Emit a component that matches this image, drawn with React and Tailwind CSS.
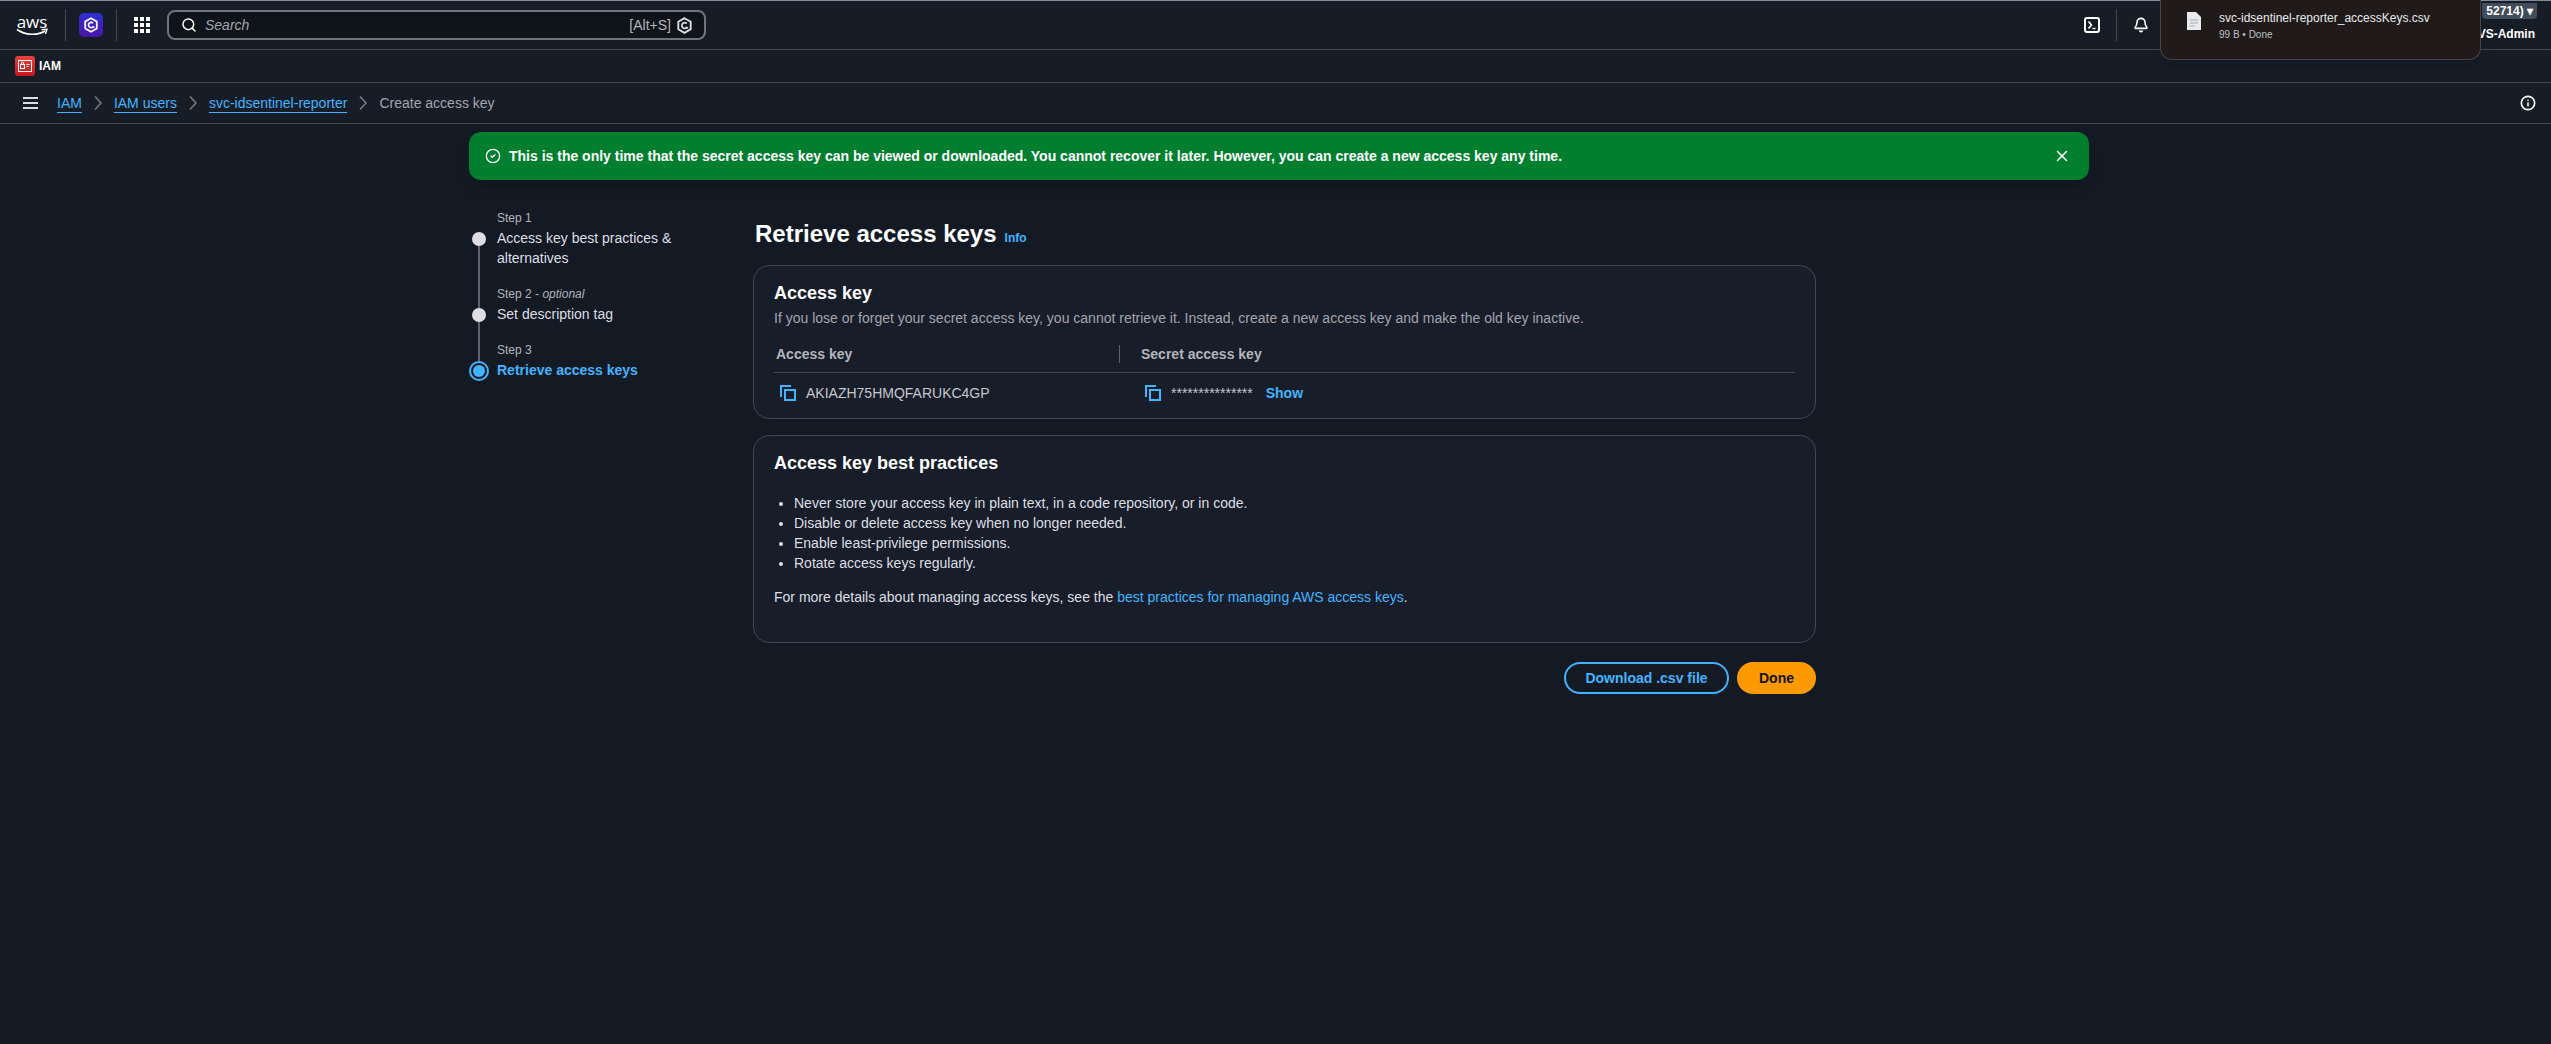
import { Search, X, Bell, CircleCheck, Info } from "lucide-react";

const crumbs = [
  { label: "IAM", link: true },
  { label: "IAM users", link: true },
  { label: "svc-idsentinel-reporter", link: true },
  { label: "Create access key", link: false },
];

const practices = [
  "Never store your access key in plain text, in a code repository, or in code.",
  "Disable or delete access key when no longer needed.",
  "Enable least-privilege permissions.",
  "Rotate access keys regularly.",
];

const Chevron = () => (
  <svg width="8" height="16" viewBox="0 0 8 16" fill="none" stroke="#737a85" strokeWidth="1.6" className="shrink-0">
    <path d="M1 1.5 7 8 1 14.5" />
  </svg>
);

const CopyIcon = () => (
  <svg width="16" height="16" viewBox="0 0 16 16" fill="none" stroke="#42b4ff" strokeWidth="2" className="shrink-0">
    <path d="M1 12V1h10" />
    <rect x="5" y="5" width="10" height="10" />
  </svg>
);

const HexIcon = ({ className, stroke = "#fff" }) => (
  <svg viewBox="0 0 16 18" fill="none" stroke={stroke} strokeWidth="2" className={className}>
    <path d="M8 1.2 14.6 5v8L8 16.8 1.4 13V5z" />
    <path d="M10.4 7a3 3 0 1 0 0 4l1.4 1" strokeWidth="1.8" />
  </svg>
);

const Step = ({ label, optional, name, first, last, active }) => (
  <div className="flex">
    <div className="w-5 flex flex-col items-center shrink-0 mr-2">
      {first ? (
        <div className="h-[22px]" />
      ) : (
        <div className={`w-[2px] bg-[#5b6270] ${active ? "h-[19px]" : "h-[22px]"}`} />
      )}
      {active ? (
        <div className="w-5 h-5 rounded-full border-2 border-[#42b4ff] flex items-center justify-center">
          <div className="w-3 h-3 rounded-full bg-[#42b4ff]" />
        </div>
      ) : (
        <div className="w-[14px] h-[14px] rounded-full bg-[#dedee3]" />
      )}
      {!last && <div className="w-[2px] flex-1 bg-[#5b6270]" />}
    </div>
    <div className={last ? "" : "pb-[18px]"}>
      <div className="text-xs leading-4 text-[#b4b4bb] mb-[2px]">
        {label}
        {optional && (
          <>
            {" - "}
            <i>optional</i>
          </>
        )}
      </div>
      <div className={`w-[190px] ${active ? "font-bold text-[#42b4ff]" : "text-[#dedee3]"}`}>{name}</div>
    </div>
  </div>
);

export default function App() {
  return (
    <div className="relative min-h-[1044px] bg-[#131a24] text-sm leading-5 text-[#c6c6cd] overflow-hidden font-['Liberation_Sans',Arial,sans-serif]">
      {/* top nav */}
      <header className="h-[50px] bg-[#161d27] border-t border-t-[#858b96] border-b border-b-[#414750] flex items-center pl-4 pr-[14px]">
        <div className="w-[32px] h-[22px] flex flex-col items-center shrink-0">
          <span className="text-white text-[17px] leading-[15px] font-['Open_Sans',sans-serif]">aws</span>
          <svg width="32" height="8" viewBox="0 0 32 8" fill="none" className="-mt-px">
            <path d="M1 1.5C9 7.5 22 7.5 29 3" stroke="#fff" strokeWidth="1.6" />
            <path d="M25.5 1.6 31 1.2 29.4 6" stroke="#fff" strokeWidth="1.4" />
          </svg>
        </div>
        <div className="w-px h-8 bg-[#414750] ml-[17px] mr-[13px]" />
        <div className="w-6 h-6 rounded-[5px] bg-gradient-to-b from-[#2a2fd0] to-[#4a12a8] flex items-center justify-center">
          <HexIcon className="w-[14px] h-4" />
        </div>
        <div className="w-px h-8 bg-[#414750] ml-[13px] mr-[17px]" />
        <div className="grid grid-cols-3 gap-[2px] w-4 shrink-0">
          {[...Array(9)].map((_, i) => (
            <div key={i} className="w-1 h-1 bg-white" />
          ))}
        </div>
        <div className="ml-[17px] w-[539px] h-[30px] rounded-lg border-2 border-[#6f747d] bg-[#0f141a] flex items-center pl-3 pr-3">
          <Search size={16} strokeWidth={2.2} className="text-white shrink-0" />
          <span className="ml-2 italic text-[#a4a4ad]">Search</span>
          <span className="ml-auto text-[#b4b4bb]">[Alt+S]</span>
          <HexIcon className="w-[15px] h-[17px] ml-[6px]" stroke="#dedee3" />
        </div>
        <div className="ml-auto flex items-center mr-[388px]">
          <svg width="16" height="16" viewBox="0 0 16 16" fill="none" stroke="#fff" strokeWidth="2">
            <rect x="1" y="1" width="14" height="14" rx="2" />
            <path d="M4.5 4.5 7.5 8l-3 3.5M8.5 11.5h3" strokeWidth="1.6" />
          </svg>
          <div className="w-px h-8 bg-[#414750] mx-4" />
          <Bell size={16} strokeWidth={2.4} className="text-white" />
        </div>
      </header>

      {/* account menu, mostly behind the download popup */}
      <div className="absolute top-[3px] right-[14px] h-[16px] bg-[#414d5c] rounded-b pl-1 pr-1 text-xs leading-4 text-white font-bold">
        52714) ▾
      </div>
      <div className="absolute top-[26px] right-[16px] text-xs leading-4 text-white font-bold">VS-Admin</div>

      {/* service bar */}
      <div className="h-[33px] bg-[#161d27] border-b border-[#414750] flex items-center pl-[15px]">
        <div className="w-5 h-5 rounded-[3px] bg-gradient-to-b from-[#e7403c] to-[#c7131f] flex items-center justify-center">
          <svg width="14" height="12" viewBox="0 0 14 12" fill="none" stroke="#fff" strokeWidth="1">
            <rect x="0.5" y="0.5" width="13" height="11" />
            <rect x="2.5" y="4.5" width="4" height="4" />
            <path d="M3.5 4.5V3a1 1 0 0 1 2 0v1.5M8.5 4.5h3M8.5 6.5h2" />
          </svg>
        </div>
        <span className="ml-1 text-xs font-bold text-white">IAM</span>
      </div>

      {/* breadcrumbs */}
      <div className="h-[41px] bg-[#161d27] border-b border-[#414750] flex items-center pl-[23px] pr-[15px]">
        <svg width="15" height="12" viewBox="0 0 15 12" fill="#dedee3" className="shrink-0 mr-[19px]">
          <rect width="15" height="2" />
          <rect y="5" width="15" height="2" />
          <rect y="10" width="15" height="2" />
        </svg>
        <div className="flex items-center gap-3">
          {crumbs.map((c, i) => (
            <div key={c.label} className="flex items-center gap-3">
              {i > 0 && <Chevron />}
              {c.link ? (
                <span className="text-[#42b4ff] border-b border-[#42b4ff] leading-[18px]">{c.label}</span>
              ) : (
                <span className="text-[#a4a4ad]">{c.label}</span>
              )}
            </div>
          ))}
        </div>
        <Info size={16} strokeWidth={2.4} className="ml-auto text-white" />
      </div>

      <div className="pl-[469px]">
        {/* success flash */}
        <div className="mt-2 w-[1620px] h-12 rounded-xl bg-[#027e2f] flex items-center pl-4 pr-[18px] text-white font-bold shadow-lg">
          <CircleCheck size={16} strokeWidth={2} className="shrink-0 mr-2" />
          <span>
            This is the only time that the secret access key can be viewed or downloaded. You cannot recover it later.
            However, you can create a new access key any time.
          </span>
          <X size={18} strokeWidth={2} className="ml-auto" />
        </div>

        <div className="flex mt-[30px]">
          {/* wizard steps */}
          <nav className="w-[284px] shrink-0">
            <Step first label="Step 1" name="Access key best practices & alternatives" />
            <Step label="Step 2" optional name="Set description tag" />
            <Step last active label="Step 3" name="Retrieve access keys" />
          </nav>

          <main className="w-[1063px] pt-2">
            <div className="flex items-baseline px-[2px]">
              <h1 className="text-2xl leading-8 font-bold text-white">Retrieve access keys</h1>
              <span className="ml-2 text-xs font-bold text-[#42b4ff]">Info</span>
            </div>

            {/* access key card */}
            <section className="mt-[15px] h-[154px] rounded-2xl border border-[#414750] bg-[#171e2a] px-5 pt-[15px]">
              <h2 className="text-lg leading-6 font-bold text-white">Access key</h2>
              <p className="mt-[3px] text-[#a4a4ad]">
                If you lose or forget your secret access key, you cannot retrieve it. Instead, create a new access key
                and make the old key inactive.
              </p>
              <div className="mt-2 h-[37px] border-b border-[#414750] flex items-center font-bold text-[#b4b4bb] pl-[2px]">
                <div className="w-[343px]">Access key</div>
                <div className="w-px h-[18px] bg-[#5b6270] mr-[21px]" />
                <div>Secret access key</div>
              </div>
              <div className="h-10 flex items-center">
                <div className="w-[371px] flex items-center pl-[6px]">
                  <CopyIcon />
                  <span className="ml-[10px] text-[#c6c6cd]">AKIAZH75HMQFARUKC4GP</span>
                </div>
                <CopyIcon />
                <span className="ml-[10px] text-[#c6c6cd]">***************</span>
                <span className="ml-[13px] font-bold text-[#42b4ff]">Show</span>
              </div>
            </section>

            {/* best practices card */}
            <section className="mt-[16px] h-[208px] rounded-2xl border border-[#414750] bg-[#171e2a] px-5 pt-[15px]">
              <h2 className="text-lg leading-6 font-bold text-white">Access key best practices</h2>
              <ul className="mt-[18px] list-disc pl-5 text-[#dedee3]">
                {practices.map((p) => (
                  <li key={p}>{p}</li>
                ))}
              </ul>
              <p className="mt-[14px] text-[#dedee3]">
                For more details about managing access keys, see the{" "}
                <span className="text-[#42b4ff]">best practices for managing AWS access keys</span>.
              </p>
            </section>

            <div className="mt-[19px] flex justify-end gap-2">
              <button className="w-[165px] h-8 rounded-full border-2 border-[#42b4ff] font-bold text-[#42b4ff]">
                Download .csv file
              </button>
              <button className="w-[79px] h-8 rounded-full bg-[#ff9900] font-bold text-[#0f141a]">Done</button>
            </div>
          </main>
        </div>
      </div>

      {/* browser download popup */}
      <div className="absolute top-0 left-[2160px] w-[321px] h-[60px] bg-[#201a1b] border border-t-0 border-[#45454a] rounded-b-xl shadow-lg pl-[26px] flex">
        <svg width="14" height="18" viewBox="0 0 14 18" fill="#e8eaed" className="mt-3 shrink-0">
          <path d="M0 0h9l5 5v13H0z" />
          <path d="M3 8h8M3 11h8M3 14h5" stroke="#a9abb0" strokeWidth="1" />
        </svg>
        <div className="ml-[18px] pt-[9px]">
          <div className="text-xs leading-[18px] text-[#e8eaed]">svc-idsentinel-reporter_accessKeys.csv</div>
          <div className="text-[10px] leading-4 text-[#bdc1c6]">99 B • Done</div>
        </div>
      </div>
    </div>
  );
}
